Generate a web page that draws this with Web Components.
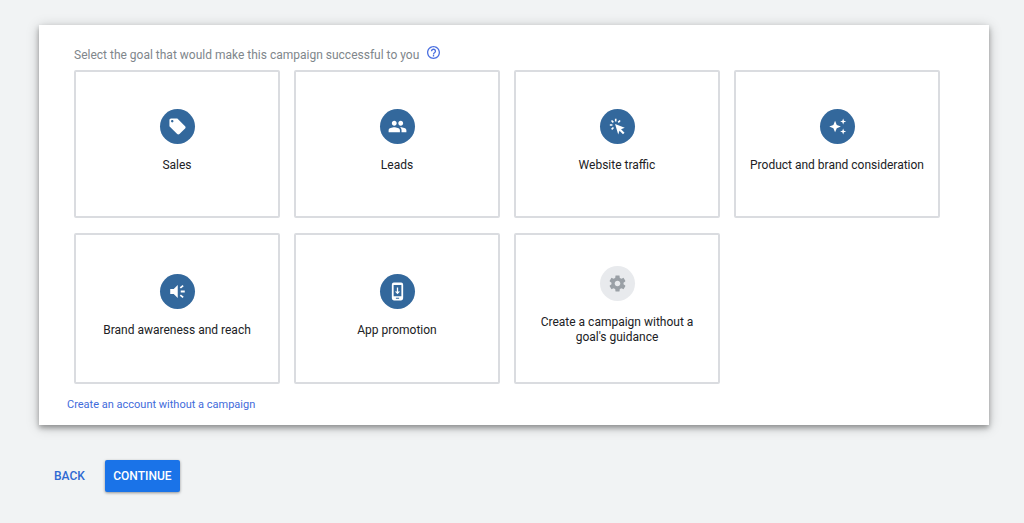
<!DOCTYPE html>
<html lang="en">
<head>
<meta charset="utf-8">
<meta name="viewport" content="width=device-width, initial-scale=1">
<title>Select a campaign goal</title>
<style>
  body { margin: 0; background: #f1f3f4; font-family: Roboto, "Liberation Sans", sans-serif; font-size: 12px; color: #202124; }
</style>
</head>
<body>
<campaign-setup></campaign-setup>

<template id="setup-template">
  <style>
    :host { display: block; padding: 25px 35px 31px 39px; }
    .actions { display: flex; align-items: center; gap: 12px; padding: 35px 7px 0; }
  </style>
  <goal-panel>
    <span slot="title">Select the goal that would make this campaign successful to you</span>
    <goal-card icon="tag">Sales</goal-card>
    <goal-card icon="people">Leads</goal-card>
    <goal-card icon="click">Website traffic</goal-card>
    <goal-card icon="sparkle">Product and brand consideration</goal-card>
    <goal-card icon="megaphone">Brand awareness and reach</goal-card>
    <goal-card icon="phone">App promotion</goal-card>
    <goal-card icon="gear" muted>Create a campaign without a goal's guidance</goal-card>
    <span slot="link">Create an account without a campaign</span>
  </goal-panel>
  <div class="actions">
    <action-button>BACK</action-button>
    <action-button primary>CONTINUE</action-button>
  </div>
</template>

<template id="panel-template">
  <style>
    :host { display: block; background: #fff; padding: 21px 49px 12px 35px; box-shadow: 0 3px 5px rgba(0,0,0,.3), 0 2px 12px rgba(0,0,0,.22); }
    header { display: flex; align-items: flex-start; gap: 8px; height: 24px; color: #80868b; font-size: 12px; }
    .title { line-height: 18px; }
    .help { border: 0; padding: 0; margin: 0; background: none; color: #4a6fe0; display: flex; cursor: pointer; }
    .help svg { width: 13px; height: 13px; fill: currentColor; }
    .grid { display: grid; grid-template-columns: repeat(4, minmax(0, 1fr)); grid-template-rows: minmax(148px, auto) minmax(151px, auto); gap: 15px 14px; }
    footer { margin: 12px 0 0 -7px; line-height: 17px; font-size: 11px; }
    a { color: #3f6bdb; text-decoration: none; }
  </style>
  <header>
    <span class="title"><slot name="title"></slot></span>
    <button class="help" type="button" aria-label="Help">
      <svg viewBox="2 2 20 20" aria-hidden="true"><path d="M11 18h2v-2h-2v2zm1-16C6.48 2 2 6.48 2 12s4.480 10 10 10 10-4.480 10-10S17.520 2 12 2zm0 18c-4.410 0-8-3.590-8-8s3.590-8 8-8 8 3.590 8 8-3.590 8-8 8zm0-14c-2.210 0-4 1.790-4 4h2c0-1.100.9-2 2-2s2 .9 2 2c0 2-3 1.750-3 5h2c0-2.250 3-2.500 3-5 0-2.210-1.790-4-4-4z"/></svg>
    </button>
  </header>
  <div class="grid"><slot></slot></div>
  <footer><a href="#account"><slot name="link"></slot></a></footer>
</template>

<template id="card-template">
  <style>
    :host { display: grid; }
    button { display: flex; flex-direction: column; align-items: center; justify-content: center; gap: 14px; box-sizing: border-box; min-width: 0; border: 2px solid #dadce0; border-radius: 2px; padding: 8px 8px 14px; background: #fff; color: #202124; font: inherit; font-size: 12px; line-height: 15px; cursor: pointer; }
    .disc { display: grid; place-items: center; flex: none; width: 35px; height: 35px; border-radius: 50%; background: #33689c; color: #fff; }
    :host([muted]) .disc { background: #e8eaed; color: #9aa0a6; }
    svg { width: 21px; height: 21px; fill: currentColor; }
    .label { max-width: 180px; }
  </style>
  <button type="button"><span class="disc"></span><span class="label"><slot></slot></span></button>
</template>

<template id="button-template">
  <style>
    :host { display: block; }
    button { height: 32px; padding: 0 8px; border: 0; border-radius: 2px; background: none; color: #2f69d2; font: inherit; font-size: 12px; font-weight: 500; cursor: pointer; }
    :host([primary]) button { min-width: 75px; background: #1a73e8; color: #fff; box-shadow: 0 1px 3px rgba(0,0,0,.4); }
  </style>
  <button type="button"><slot></slot></button>
</template>

<script>
  const ICONS = {
    tag: '<path d="M21.410 11.580l-9-9C12.050 2.220 11.550 2 11 2H4c-1.100 0-2 .9-2 2v7c0 .55.22 1.050.59 1.420l9 9c.36.36.86.58 1.410.58s1.050-.22 1.410-.59l7-7c.37-.36.59-.86.59-1.410s-.23-1.060-.59-1.420zM5.500 7C4.670 7 4 6.330 4 5.500S4.670 4 5.500 4 7 4.670 7 5.500 6.330 7 5.500 7z"/>',
    people: '<path d="M16 11c1.660 0 2.990-1.340 2.990-3S17.660 5 16 5s-3 1.340-3 3 1.340 3 3 3zm-8 0c1.660 0 2.990-1.340 2.990-3S9.660 5 8 5 5 6.340 5 8s1.340 3 3 3zm0 2c-2.330 0-7 1.170-7 3.500V19h14v-2.500C15 14.170 10.330 13 8 13zm8 0c-.29 0-.62.020-.97.050 1.160.84 1.970 1.970 1.970 3.450V19h6v-2.500c0-2.330-4.670-3.500-7-3.500z"/>',
    click: '<path d="M9 9l12 4.600-4.600 1.800 4.300 4.300-1.900 1.900-4.300-4.300-1.600 4.500z"/><path d="M9.800 2.500v3.300M4.600 4.600l2.300 2.300M2.500 10.100h3.200M4.700 15.600L7 13.300M15.200 4.600l-2.300 2.300" fill="none" stroke="currentColor" stroke-width="2"/>',
    sparkle: '<path d="M9 5l2.100 5.100L16.200 12l-5.100 2.100L9 19.200l-2.100-5.100L1.800 12l5.100-1.900zM19 2l1 2.800 2.800 1-2.800 1L19 9.600l-1-2.800-2.800-1 2.800-1zM19 14.400l1 2.800 2.800 1-2.800 1-1 2.800-1-2.800-2.800-1 2.800-1z"/>',
    megaphone: '<path d="M3 8.800v6.400h4.300l5 5V3.800l-5 5z"/><path d="M16 12h5M15.500 7.500l3.500-2.800M15.500 16.500l3.500 2.800" fill="none" stroke="currentColor" stroke-width="2.200"/>',
    phone: '<path fill-rule="evenodd" d="M7.500 1h9A2.500 2.500 0 0 1 19 3.500v17a2.500 2.500 0 0 1-2.500 2.500h-9A2.500 2.500 0 0 1 5 20.500v-17A2.500 2.500 0 0 1 7.500 1zM7.200 4v14h9.600V4zM10 19.700v1.300h4v-1.300z"/><path d="M11.200 7h1.600v5h2.400L12 15.500 8.800 12h2.400z"/>',
    gear: '<path d="M19.430 12.980c.04-.32.070-.64.070-.98s-.03-.66-.07-.98l2.110-1.650c.19-.15.24-.42.12-.64l-2-3.460c-.12-.22-.39-.3-.61-.22l-2.490 1c-.52-.4-1.080-.73-1.690-.98l-.38-2.650C14.460 2.180 14.250 2 14 2h-4c-.25 0-.46.18-.49.42l-.38 2.650c-.61.25-1.170.59-1.690.98l-2.490-1c-.23-.09-.49 0-.61.22l-2 3.460c-.13.22-.07.49.12.64l2.110 1.650c-.04.32-.07.65-.07.98s.03.66.07.98l-2.110 1.650c-.19.15-.24.42-.12.64l2 3.460c.12.22.39.3.61.22l2.490-1c.52.4 1.080.73 1.690.98l.38 2.650c.03.24.24.42.49.42h4c.25 0 .46-.18.49-.42l.38-2.650c.61-.25 1.170-.59 1.690-.98l2.490 1c.23.09.49 0 .61-.22l2-3.460c.12-.22.070-.49-.12-.64zM12 15.500c-1.930 0-3.500-1.570-3.500-3.500s1.570-3.500 3.500-3.500 3.500 1.570 3.500 3.500-1.570 3.500-3.500 3.500z"/>'
  };

  class TemplateElement extends HTMLElement {
    constructor() {
      super();
      const template = document.getElementById(this.constructor.templateId);
      this.attachShadow({ mode: "open" }).append(template.content.cloneNode(true));
    }
  }

  class GoalPanel extends TemplateElement { static templateId = "panel-template"; }
  class ActionButton extends TemplateElement { static templateId = "button-template"; }
  class CampaignSetup extends TemplateElement { static templateId = "setup-template"; }
  class GoalCard extends TemplateElement {
    static templateId = "card-template";
    connectedCallback() {
      const drawing = ICONS[this.getAttribute("icon")];
      this.shadowRoot.querySelector(".disc").innerHTML = `<svg viewBox="-1 -1 26 26" aria-hidden="true">${drawing}</svg>`;
    }
  }

  customElements.define("goal-card", GoalCard);
  customElements.define("action-button", ActionButton);
  customElements.define("goal-panel", GoalPanel);
  customElements.define("campaign-setup", CampaignSetup);
</script>
</body>
</html>
